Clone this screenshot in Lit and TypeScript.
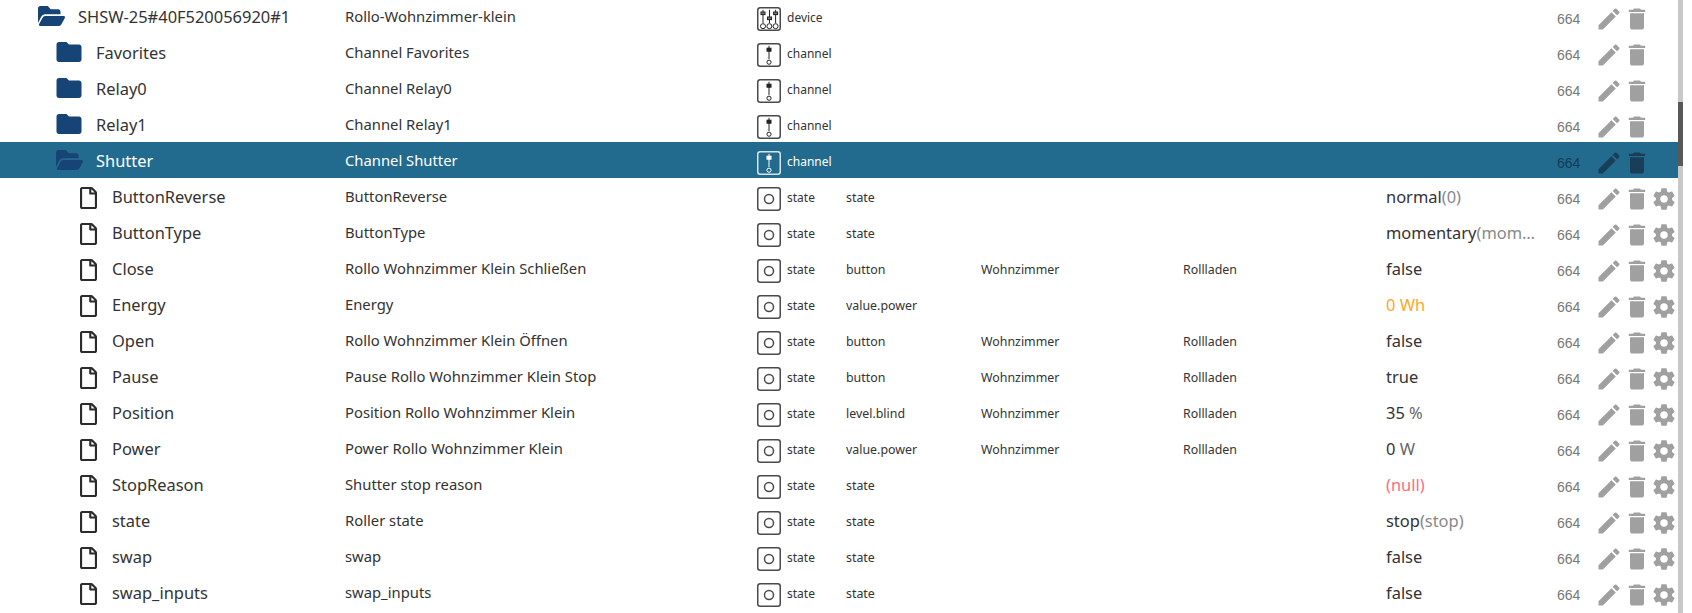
import { LitElement, css, html, svg } from "lit";
import { customElement } from "lit/decorators.js";

type Kind = "open" | "folder" | "file";
type Row = {
  kind: Kind;
  level: number;
  name: string;
  title: string;
  type: string;
  role?: string;
  room?: string;
  func?: string;
  value?: unknown;
  selected?: boolean;
};

const ICON_FOLDER = "M10 4H4c-1.1 0-1.99.9-1.99 2L2 18c0 1.1.9 2 2 2h16c1.1 0 2-.9 2-2V8c0-1.1-.9-2-2-2h-8l-2-2z";
const ICON_OPEN = "M572.694 292.093L500.27 416.248A63.997 63.997 0 0 1 444.989 448H45.025c-18.523 0-30.064-20.093-20.731-36.093l72.424-124.155A64 64 0 0 1 152 256h399.964c18.523 0 30.064 20.093 20.73 36.093zM152 224h328v-48c0-26.51-21.49-48-48-48H272l-64-64H48C21.49 64 0 85.49 0 112v278.046l69.077-118.418C86.214 242.25 117.989 224 152 224z";
const ICON_FILE = "M369.9 97.9L286 14C277 5 264.8-.1 252.1-.1H48C21.5 0 0 21.5 0 48v416c0 26.5 21.5 48 48 48h288c26.5 0 48-21.5 48-48V131.9c0-12.7-5.1-25-14.1-34zM332.1 128H256V51.9l76.1 76.1zM48 464V48h160v104c0 13.3 10.7 24 24 24h104v288H48z";
const ICON_EDIT = "M3 17.25V21h3.75L17.81 9.94l-3.75-3.75L3 17.25zM20.71 7.04c.39-.39.39-1.02 0-1.41l-2.34-2.34c-.39-.39-1.02-.39-1.41 0l-1.83 1.83 3.75 3.75 1.83-1.83z";
const ICON_TRASH = "M6 19c0 1.1.9 2 2 2h8c1.1 0 2-.9 2-2V7H6v12zM19 4h-3.5l-1-1h-5l-1 1H5v2h14V4z";
const ICON_GEAR = "M19.43 12.98c.04-.32.07-.64.07-.98s-.03-.66-.07-.98l2.11-1.65c.19-.15.24-.42.12-.64l-2-3.46c-.12-.22-.39-.3-.61-.22l-2.49 1c-.52-.4-1.08-.73-1.69-.98l-.38-2.65C14.46 2.18 14.25 2 14 2h-4c-.25 0-.46.18-.49.42l-.38 2.65c-.61.25-1.17.59-1.69.98l-2.49-1c-.23-.09-.49 0-.61.22l-2 3.46c-.13.22-.07.49.12.64l2.11 1.65c-.04.32-.07.65-.07.98s.03.66.07.98l-2.11 1.65c-.19.15-.24.42-.12.64l2 3.46c.12.22.39.3.61.22l2.49-1c.52.4 1.08.73 1.69.98l.38 2.65c.03.24.24.42.49.42h4c.25 0 .46-.18.49-.42l.38-2.65c.61-.25 1.17-.59 1.69-.98l2.49 1c.23.09.49 0 .61-.22l2-3.46c.12-.22.07-.49-.12-.64l-2.11-1.65zM12 15.5c-1.93 0-3.5-1.57-3.5-3.5s1.57-3.5 3.5-3.5 3.5 1.57 3.5 3.5-1.57 3.5-3.5 3.5z";

const plain = (main: string, rest = "") => html`<span>${main}</span><span class="dim">${rest}</span>`;
const unit = (main: string, rest: string) => html`<span>${main}</span><span class="unit">${rest}</span>`;

const ROWS: Row[] = [
  { kind: "open", level: 0, name: "SHSW-25#40F520056920#1", title: "Rollo-Wohnzimmer-klein", type: "device" },
  { kind: "folder", level: 1, name: "Favorites", title: "Channel Favorites", type: "channel" },
  { kind: "folder", level: 1, name: "Relay0", title: "Channel Relay0", type: "channel" },
  { kind: "folder", level: 1, name: "Relay1", title: "Channel Relay1", type: "channel" },
  { kind: "open", level: 1, name: "Shutter", title: "Channel Shutter", type: "channel", selected: true },
  { kind: "file", level: 2, name: "ButtonReverse", title: "ButtonReverse", type: "state", role: "state", value: plain("normal", "(0)") },
  { kind: "file", level: 2, name: "ButtonType", title: "ButtonType", type: "state", role: "state", value: plain("momentary", "(mom…") },
  { kind: "file", level: 2, name: "Close", title: "Rollo Wohnzimmer Klein Schließen", type: "state", role: "button", room: "Wohnzimmer", func: "Rollladen", value: plain("false") },
  { kind: "file", level: 2, name: "Energy", title: "Energy", type: "state", role: "value.power", value: html`<span class="orange">0 Wh</span>` },
  { kind: "file", level: 2, name: "Open", title: "Rollo Wohnzimmer Klein Öffnen", type: "state", role: "button", room: "Wohnzimmer", func: "Rollladen", value: plain("false") },
  { kind: "file", level: 2, name: "Pause", title: "Pause Rollo Wohnzimmer Klein Stop", type: "state", role: "button", room: "Wohnzimmer", func: "Rollladen", value: plain("true") },
  { kind: "file", level: 2, name: "Position", title: "Position Rollo Wohnzimmer Klein", type: "state", role: "level.blind", room: "Wohnzimmer", func: "Rollladen", value: unit("35", " %") },
  { kind: "file", level: 2, name: "Power", title: "Power Rollo Wohnzimmer Klein", type: "state", role: "value.power", room: "Wohnzimmer", func: "Rollladen", value: unit("0", " W") },
  { kind: "file", level: 2, name: "StopReason", title: "Shutter stop reason", type: "state", role: "state", value: html`<span class="null">(null)</span>` },
  { kind: "file", level: 2, name: "state", title: "Roller state", type: "state", role: "state", value: plain("stop", "(stop)") },
  { kind: "file", level: 2, name: "swap", title: "swap", type: "state", role: "state", value: plain("false") },
  { kind: "file", level: 2, name: "swap_inputs", title: "swap_inputs", type: "state", role: "state", value: plain("false") },
];

@customElement("app-root")
export class AppRoot extends LitElement {
  static styles = css`
    :host {
      display: flex;
      height: 613px;
      overflow: hidden;
      background: #fff;
      color: #333;
      font-family: "Noto Sans", sans-serif;
    }

    .list {
      width: 1678px;
      margin-top: -2px;
    }

    .row {
      display: grid;
      grid-template-columns: 345px 412px 89px 135px 202px 203px 171px 38px 28px 28px 27px;
      align-items: center;
      height: 36px;
      font-size: 14.8px;
      white-space: nowrap;
    }

    .row.selected {
      background: #236b8e;
      color: #fff;
    }

    .name {
      display: flex;
      align-items: center;
      font-size: 16.45px;
    }

    .level-0 {
      padding-left: 38px;
    }

    .level-1 {
      padding-left: 56px;
    }

    .level-2 {
      padding-left: 80px;
    }

    .slot-open {
      width: 40px;
    }

    .slot-folder {
      width: 40px;
    }

    .slot-file {
      width: 32px;
    }

    .ico-open {
      display: block;
      width: 27px;
      height: 20px;
      fill: #164477;
    }

    .ico-folder {
      display: block;
      width: 30px;
      height: 30px;
      margin-left: -2.5px;
      fill: #164477;
    }

    .ico-file {
      display: block;
      width: 17px;
      height: 22px;
      margin-top: 3px;
      fill: #2b2b2b;
    }

    .type {
      display: flex;
      align-items: center;
      gap: 6px;
      font-size: 12px;
    }

    .type-label {
      padding-top: 2px;
    }

    .type-icon {
      display: block;
      width: 24px;
      height: 24px;
      margin-top: 5px;
      fill: none;
      stroke: #4a4a4a;
      color: #222;
    }

    .selected .type-icon {
      stroke: #d5e3ea;
      color: #fff;
    }

    .small {
      padding-top: 2px;
      font-size: 12.4px;
    }

    .value {
      padding-top: 1px;
      font-size: 16.45px;
    }

    .dim {
      color: #888;
    }

    .unit {
      color: #666;
    }

    .orange {
      color: #ffa726;
    }

    .null {
      color: #ff6b81;
    }

    .acl {
      margin-top: 5px;
      font-family: "Liberation Sans", sans-serif;
      font-size: 14px;
      color: #777;
    }

    .selected .acl {
      color: #123c55;
    }

    .act {
      display: block;
      width: 28px;
      height: 28px;
      margin-top: 5px;
      fill: #a0a0a0;
    }

    .act.gear {
      width: 26px;
      height: 26px;
    }

    .selected .act {
      fill: #183f57;
    }

    .scrollbar {
      width: 5px;
      height: 613px;
      background: #c8c8c8;
    }

    .thumb {
      width: 5px;
      height: 64px;
      margin-top: 102px;
      background: #585858;
    }
  `;

  typeIcon(type: string) {
    const slider = (x: number, y: number) => svg`
      <line x1=${x} y1="2.8" x2=${x} y2="16" stroke="currentColor" stroke-width="1"></line>
      <rect x=${x - 2} y=${y} width="4" height="2.6" fill="#777" stroke="currentColor" stroke-width="1"></rect>`;
    const knob = (x: number, r: number) => svg`
      <circle cx=${x} cy="19.2" r=${r} stroke="currentColor" stroke-width="1"></circle>`;
    let body;
    if (type === "device") {
      body = svg`${slider(6, 5)}${slider(12.5, 10)}${slider(18.6, 5)}${knob(6, 2.5)}${knob(12.4, 2.5)}${knob(18.6, 2.5)}`;
    } else if (type === "channel") {
      body = svg`<line x1="12" y1="2.8" x2="12" y2="16" stroke="currentColor" stroke-width="1"></line>
        <rect x="10" y="5.2" width="4" height="3" fill="currentColor" stroke="currentColor" stroke-width="1"></rect>
        ${knob(12, 2.1)}`;
    } else {
      body = svg`<circle cx="12" cy="12" r="4.5" stroke-width="1.5"></circle>`;
    }
    return html`<svg class="type-icon" viewBox="0 0 24 24">
      <rect x="0.75" y="0.75" width="22.5" height="22.5" rx="2.5" stroke-width="1.5"></rect>
      ${body}
    </svg>`;
  }

  treeIcon(kind: Kind) {
    if (kind === "open") {
      return html`<svg class="ico-open" viewBox="0 64 576 384" preserveAspectRatio="none"><path d=${ICON_OPEN}></path></svg>`;
    }
    if (kind === "folder") {
      return html`<svg class="ico-folder" viewBox="0 0 24 24"><path d=${ICON_FOLDER}></path></svg>`;
    }
    return html`<svg class="ico-file" viewBox="0 0 384 512" preserveAspectRatio="none"><path d=${ICON_FILE}></path></svg>`;
  }

  action(path: string, extra = "") {
    return html`<svg class="act ${extra}" viewBox="0 0 24 24"><path d=${path}></path></svg>`;
  }

  renderRow(row: Row) {
    return html`
      <div class="row ${row.selected ? "selected" : ""}">
        <div class="name level-${row.level}">
          <div class="slot-${row.kind}">${this.treeIcon(row.kind)}</div>
          <span>${row.name}</span>
        </div>
        <div>${row.title}</div>
        <div class="type">${this.typeIcon(row.type)}<span class="type-label">${row.type}</span></div>
        <div class="small">${row.role ?? ""}</div>
        <div class="small">${row.room ?? ""}</div>
        <div class="small">${row.func ?? ""}</div>
        <div class="value">${row.value ?? ""}</div>
        <div class="acl">664</div>
        ${this.action(ICON_EDIT)}
        ${this.action(ICON_TRASH)}
        ${row.kind === "file" ? this.action(ICON_GEAR, "gear") : html`<span></span>`}
      </div>
    `;
  }

  render() {
    return html`
      <div class="list">${ROWS.map((row) => this.renderRow(row))}</div>
      <div class="scrollbar"><div class="thumb"></div></div>
    `;
  }
}
